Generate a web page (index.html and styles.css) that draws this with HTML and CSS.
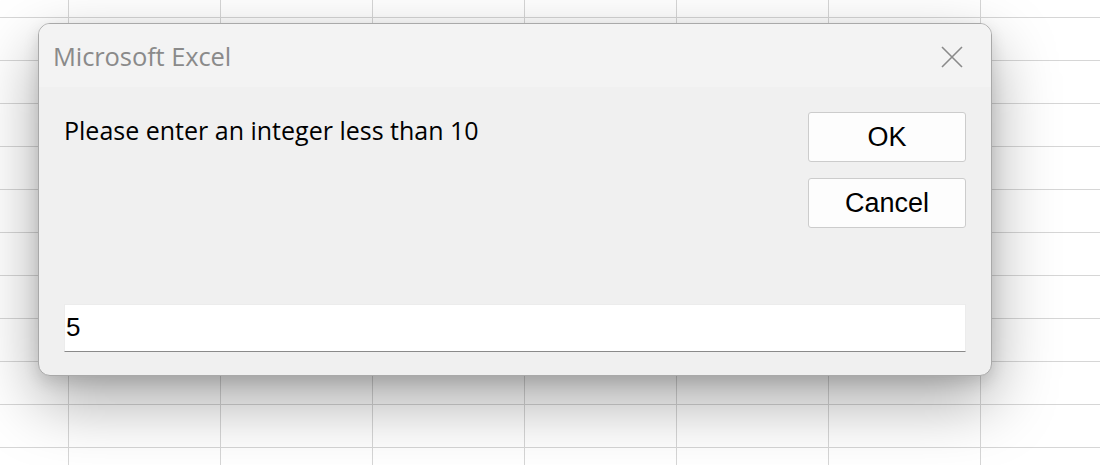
FILE: index.html
```html
<!DOCTYPE html>
<html>
<head>
<meta charset="utf-8">
<link rel="stylesheet" href="styles.css">
</head>
<body>
<div class="sheet">
  <div class="dialog">
    <div class="titlebar">
      <span class="title">Microsoft Excel</span>
      <svg class="close" width="22" height="22" viewBox="0 0 22 22"><path d="M1 1 L21 21 M21 1 L1 21" stroke="#8a8a8a" stroke-width="1.6" fill="none"/></svg>
    </div>
    <div class="body">
      <div class="top">
        <div class="message">Please enter an integer less than 10</div>
        <div class="buttons">
          <button class="btn">OK</button>
          <button class="btn">Cancel</button>
        </div>
      </div>
      <div class="input">5</div>
    </div>
  </div>
</div>
</body>
</html>
```
FILE: styles.css
```css
html, body {
  margin: 0;
  padding: 0;
}
body {
  width: 1100px;
  height: 465px;
  overflow: hidden;
  background-color: #ffffff;
  background-image:
    linear-gradient(to right, #d6d6d6 1px, transparent 1px),
    linear-gradient(to bottom, #d6d6d6 1px, transparent 1px);
  background-size: 152px 43px, 152px 43px;
  background-position: 68px 0, 0 17px;
}
.sheet {
  padding: 23px 0 0 38px;
}
.dialog {
  width: 952px;
  height: 351px;
  border: 1px solid #a9a9a9;
  border-radius: 12px;
  background: #f0f0f0;
  box-shadow: 0 26px 64px rgba(0, 0, 0, 0.34), 0 6px 16px rgba(0, 0, 0, 0.12);
  display: flex;
  flex-direction: column;
  overflow: hidden;
}
.titlebar {
  height: 63px;
  background: #f3f3f3;
  display: flex;
  align-items: center;
  justify-content: space-between;
  padding: 0 28px 0 14px;
}
.title {
  font-family: "Open Sans", "Noto Sans", sans-serif;
  font-size: 25.5px;
  color: #8a8a8a;
  letter-spacing: -0.1px;
}
.close {
  display: block;
  margin-top: 2px;
}
.body {
  flex: 1;
  display: flex;
  flex-direction: column;
  justify-content: space-between;
  padding: 24px 25px 23px 25px;
}
.top {
  display: flex;
  justify-content: space-between;
  align-items: flex-start;
}
.message {
  font-family: "Open Sans", "Noto Sans", sans-serif;
  font-size: 25px;
  line-height: 34px;
  color: #000;
  margin-top: 2px;
}
.buttons {
  display: flex;
  flex-direction: column;
  gap: 16px;
  margin-top: 1px;
}
.btn {
  width: 158px;
  height: 50px;
  background: #fdfdfd;
  border: 1px solid #cccccc;
  border-radius: 3px;
  font-family: "Liberation Sans", Arial, sans-serif;
  font-size: 27px;
  color: #000;
  padding: 0;
}
.input {
  box-sizing: border-box;
  height: 48px;
  background: #ffffff;
  border: 1px solid #ececec;
  border-bottom: 1px solid #8a8a8a;
  font-family: "Liberation Sans", Arial, sans-serif;
  font-size: 26px;
  line-height: 44px;
  padding-left: 1px;
  color: #000;
}
```
